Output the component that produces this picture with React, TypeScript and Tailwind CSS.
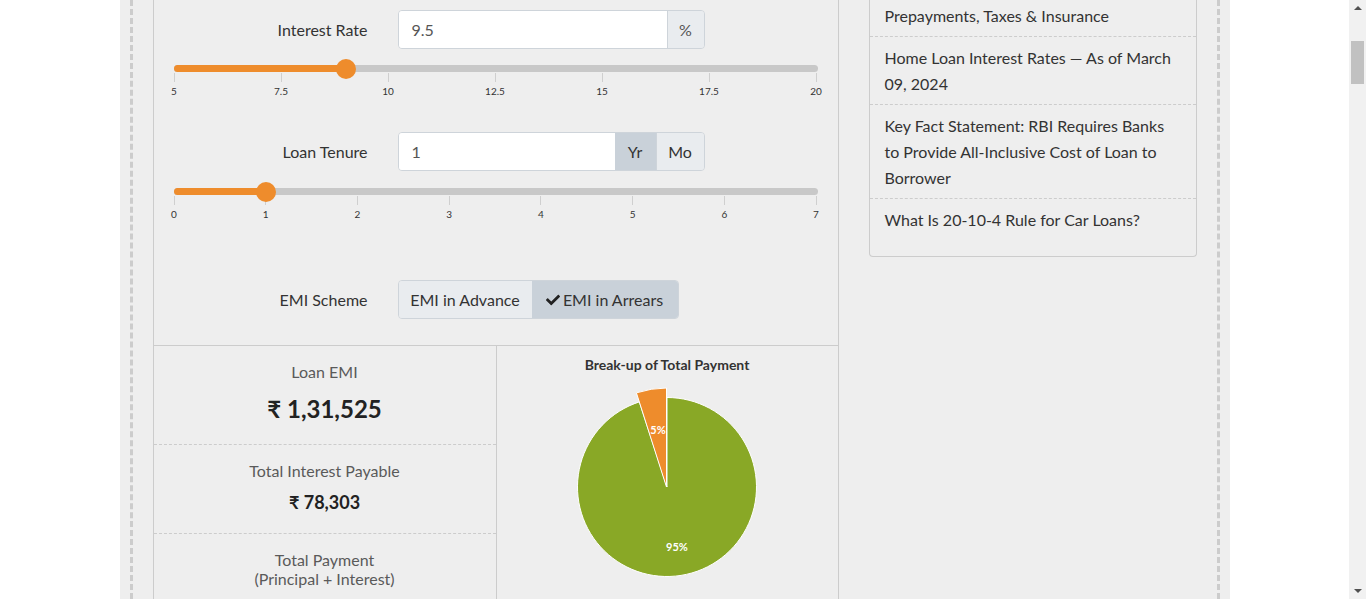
import React from "react";
import { FaCheck } from "react-icons/fa";

function Slider({ ticks, thumb }: { ticks: string[]; thumb: number }) {
  const span = 642;
  return (
    <div className="relative h-[36px] w-[644px]">
      <div className="absolute left-0 top-0 h-[7px] w-full rounded-full bg-[#c8c8c8]" />
      <div
        className="absolute left-0 top-0 h-[7px] rounded-full bg-[#ee8c2c]"
        style={{ width: `${thumb}px` }}
      />
      {ticks.map((t, i) => {
        const x = (i / (ticks.length - 1)) * span;
        return (
          <React.Fragment key={t}>
            <div
              className="absolute top-[8px] h-[9px] w-px bg-[#cfcfcf]"
              style={{ left: `${x}px` }}
            />
            <div
              className="absolute top-[21px] -translate-x-1/2 text-[10px] leading-[10px] text-[#333]"
              style={{ left: `${x + 0.5}px` }}
            >
              {t}
            </div>
          </React.Fragment>
        );
      })}
      <div
        className="absolute top-[-6px] h-[20px] w-[20px] -translate-x-1/2 rounded-full bg-[#ee8c2c]"
        style={{ left: `${thumb}px` }}
      />
    </div>
  );
}

function Label({ children }: { children: React.ReactNode }) {
  return <div className="w-[194px] text-right text-[16px] text-[#333]">{children}</div>;
}

function Pie() {
  const cx = 170;
  const cy = 114;
  const r = 89.5;
  const ro = 99;
  const s = Math.sin((18 * Math.PI) / 180);
  const c = Math.cos((18 * Math.PI) / 180);
  const gEnd = `${cx - r * s} ${cy - r * c}`;
  const oStart = `${cx - ro * s} ${cy - ro * c}`;
  return (
    <svg width="341" height="230" viewBox="0 0 341 230" className="block">
      <path
        d={`M ${cx} ${cy} L ${cx} ${cy - r} A ${r} ${r} 0 1 1 ${gEnd} Z`}
        fill="#89a826"
        stroke="#ffffff"
        strokeWidth="1"
        strokeLinejoin="round"
      />
      <path
        d={`M ${cx - 0.5} ${cy} L ${oStart} A ${ro} ${ro} 0 0 1 ${cx - 0.5} ${cy - ro} Z`}
        fill="#ee8c2c"
        stroke="#ffffff"
        strokeWidth="1"
        strokeLinejoin="round"
      />
      <text
        x="161"
        y="61"
        textAnchor="middle"
        fontSize="11"
        fontWeight="bold"
        fill="#ffffff"
        fontFamily="Lato, sans-serif"
      >
        5%
      </text>
      <text
        x="180"
        y="178"
        textAnchor="middle"
        fontSize="11"
        fontWeight="bold"
        fill="#ffffff"
        fontFamily="Lato, sans-serif"
      >
        95%
      </text>
    </svg>
  );
}

export default function App() {
  return (
    <div className="flex h-[599px] w-full overflow-hidden bg-white font-['Lato','Noto_Sans',sans-serif]">
      <div className="h-full flex-1">
        <div className="mx-auto h-full w-[1110px] bg-[#eeeeee] px-[10px]">
          <div className="flex h-full gap-[30px] border-x-[3px] border-dashed border-[#cccccc] px-[20px]">
            {/* Calculator panel */}
            <div className="h-full w-[686px] shrink-0 border-x border-[#cccccc]">
              <div className="px-[20px] pb-[26px] pt-[10px]">
                <div className="flex h-[39px] items-center">
                  <Label>Interest Rate</Label>
                  <div className="ml-[30px] flex h-[39px] w-[307px] overflow-hidden rounded-[4px] border border-[#ced4da]">
                    <div className="flex flex-1 items-center bg-white pl-[13px] text-[16px] text-[#555]">9.5</div>
                    <div className="flex w-[37px] items-center justify-center border-l border-[#ced4da] bg-[#e9ecef] text-[16px] text-[#555]">
                      %
                    </div>
                  </div>
                </div>
                <div className="mt-[16px]">
                  <Slider ticks={["5", "7.5", "10", "12.5", "15", "17.5", "20"]} thumb={172} />
                </div>
                <div className="mt-[31px] flex h-[39px] items-center">
                  <Label>Loan Tenure</Label>
                  <div className="ml-[30px] flex h-[39px] w-[307px] overflow-hidden rounded-[4px] border border-[#ced4da]">
                    <div className="flex flex-1 items-center bg-white pl-[13px] text-[16px] text-[#555]">1</div>
                    <div className="flex w-[41px] items-center justify-center bg-[#c9d1d9] text-[16px] text-[#333]">
                      Yr
                    </div>
                    <div className="flex w-[48px] items-center justify-center border-l border-[#ced4da] bg-[#e9ecef] text-[16px] text-[#333]">
                      Mo
                    </div>
                  </div>
                </div>
                <div className="mt-[17px]">
                  <Slider ticks={["0", "1", "2", "3", "4", "5", "6", "7"]} thumb={92} />
                </div>
                <div className="mt-[56px] flex h-[39px] items-center">
                  <Label>EMI Scheme</Label>
                  <div className="ml-[30px] flex h-[39px] w-[281px] overflow-hidden rounded-[4px] border border-[#ced4da]">
                    <div className="flex w-[133px] items-center justify-center bg-[#e9ecef] text-[16px] text-[#333]">
                      EMI in Advance
                    </div>
                    <div className="flex w-[146px] items-center justify-center gap-[3px] bg-[#c9d1d9] text-[16px] text-[#333]">
                      <FaCheck className="h-[14px] w-[14px] text-[#222]" />
                      EMI in Arrears
                    </div>
                  </div>
                </div>
              </div>
              <div className="flex border-t border-[#cccccc]">
                <div className="w-[343px] shrink-0 border-r border-[#cccccc] text-center">
                  <div className="h-[99px] border-b border-dashed border-[#cccccc] pt-[16px]">
                    <div className="text-[16px] leading-[20px] text-[#5a5a5a]">Loan EMI</div>
                    <div className="mt-[12px] text-[24px] font-bold leading-[30px] text-[#222]">₹ 1,31,525</div>
                  </div>
                  <div className="h-[89px] border-b border-dashed border-[#cccccc] pt-[16px]">
                    <div className="text-[16px] leading-[20px] text-[#5a5a5a]">Total Interest Payable</div>
                    <div className="mt-[9px] text-[18px] font-bold leading-[24px] text-[#222]">₹ 78,303</div>
                  </div>
                  <div className="pt-[16px]">
                    <div className="text-[16px] leading-[19px] text-[#5a5a5a]">Total Payment</div>
                    <div className="text-[16px] leading-[19px] text-[#5a5a5a]">(Principal + Interest)</div>
                  </div>
                </div>
                <div className="flex-1">
                  <div className="pt-[11px] text-center text-[14px] font-bold leading-[16px] text-[#333]">
                    Break-up of Total Payment
                  </div>
                  <Pie />
                </div>
              </div>
            </div>

            {/* Sidebar */}
            <div className="mt-[-5px] w-[328px] shrink-0 self-start rounded-b-[4px] border-x border-b border-[#cccccc] text-[16px] leading-[26px] text-[#333]">
              <div className="border-b border-dashed border-[#cccccc] px-[15px] pb-[7px] pt-[8px]">
                Prepayments, Taxes &amp; Insurance
              </div>
              <div className="border-b border-dashed border-[#cccccc] px-[15px] pb-[7px] pt-[8px]">
                <div className="whitespace-nowrap">Home Loan Interest Rates — As of March</div>
                <div>09, 2024</div>
              </div>
              <div className="border-b border-dashed border-[#cccccc] px-[15px] pb-[7px] pt-[8px]">
                <div className="whitespace-nowrap">Key Fact Statement: RBI Requires Banks</div>
                <div className="whitespace-nowrap">to Provide All-Inclusive Cost of Loan to</div>
                <div>Borrower</div>
              </div>
              <div className="px-[15px] pb-[23px] pt-[8px]">What Is 20-10-4 Rule for Car Loans?</div>
            </div>
          </div>
        </div>
      </div>

      {/* Fake scrollbar */}
      <div className="relative h-full w-[17px] shrink-0 bg-[#f1f1f1]">
        <div className="absolute left-[5px] top-[6px] h-0 w-0 border-x-[4px] border-b-[4px] border-x-transparent border-b-[#505050]" />
        <div className="absolute left-[2px] top-[41px] h-[43px] w-[13px] bg-[#c1c1c1]" />
        <div className="absolute bottom-[6px] left-[5px] h-0 w-0 border-x-[4px] border-t-[4px] border-x-transparent border-t-[#505050]" />
      </div>
    </div>
  );
}
